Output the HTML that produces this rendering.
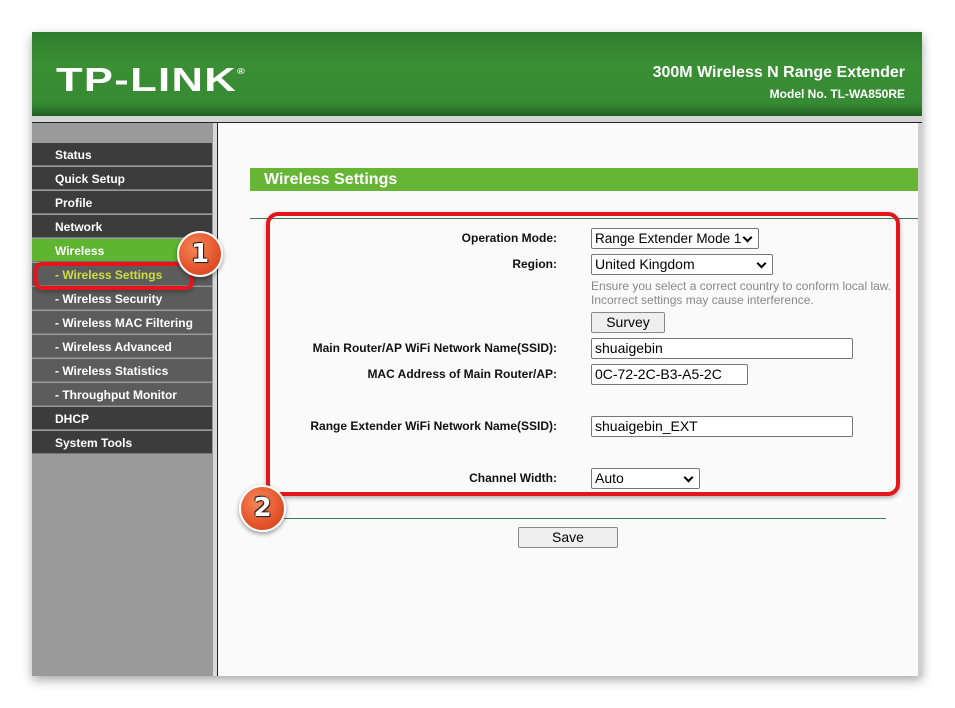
<!DOCTYPE html>
<html><head><meta charset="utf-8"><style>
*{margin:0;padding:0;box-sizing:border-box}
body{width:955px;height:708px;background:#fff;position:relative;overflow:hidden;font-family:"Liberation Sans",Arial,sans-serif}
.a{position:absolute}
#frame{left:32px;top:32px;width:890px;height:644px;background:#c8c8c8;box-shadow:0 4px 10px rgba(0,0,0,.35)}
#hdr{left:32px;top:32px;width:890px;height:84px;background:linear-gradient(180deg,#2f7d2f 0%,#3a8f34 40%,#368a33 85%,#1f5e22 100%)}
#logo{left:56px;top:62px;color:#fff;font-weight:bold;font-size:33px;letter-spacing:1px;transform:scaleX(1.32);transform-origin:left top;line-height:36px}
#strip{left:32px;top:116px;width:890px;height:7px;background:#d4d4d4}
#blk{left:32px;top:122px;width:890px;height:1px;background:#222}
#side{left:32px;top:123px;width:181px;height:553px;background:#9a9a9a}
#sep{left:213px;top:123px;width:4px;height:553px;background:#d8d8d8}
#sep2{left:217px;top:123px;width:1px;height:553px;background:#222}
#main{left:218px;top:123px;width:700px;height:553px;background:#fafafa}
#rgt{left:918px;top:123px;width:4px;height:553px;background:#d0d0d0}
.m{position:absolute;left:32px;width:180px;height:23px;background:#3c3c3c;color:#fff;font-size:12px;font-weight:bold;line-height:24px;padding-left:23px;border-bottom:1px solid #777}
.s{background:#5c5c5c;padding-left:23px}
.lbl{position:absolute;right:398px;font-size:12px;font-weight:bold;color:#111;text-align:right;white-space:nowrap}
.in{position:absolute;left:591px;height:21px;border:1px solid #777;background:#fff;font-size:14px;line-height:19px;padding-left:3px;color:#000;border-radius:2px;white-space:nowrap;overflow:hidden}
.sel::after{content:"";position:absolute;right:7px;top:5px;width:5px;height:5px;border-right:2px solid #000;border-bottom:2px solid #000;transform:rotate(45deg)}
.btn{position:absolute;height:21px;border:1px solid #888;background:#efefef;font-size:14px;text-align:center;line-height:19px;border-radius:2px}
.circ{position:absolute;border-radius:50%;background:radial-gradient(circle at 40% 35%,#f58a5a,#e4532a 60%,#c9401c);border:2px solid #fff;box-shadow:0 2px 5px rgba(0,0,0,.4);color:#fff;font-weight:bold;font-size:26px;text-align:center;font-family:"DejaVu Sans",sans-serif;text-shadow:0 0 2px #000,1px 1px 0 #333,-1px -1px 0 #333}
</style></head><body>
<div class="a" id="frame"></div>
<div class="a" id="hdr"></div>
<div class="a" id="logo">TP-LINK<span style="font-size:8px;vertical-align:top;line-height:20px">®</span></div>
<div class="a" style="right:50px;top:64px;color:#fff;font-weight:bold;font-size:16px">300M Wireless N Range Extender</div>
<div class="a" style="right:50px;top:87px;color:#fff;font-weight:bold;font-size:12px">Model No. TL-WA850RE</div>
<div class="a" id="strip"></div><div class="a" id="blk"></div>
<div class="a" id="side"></div><div class="a" id="sep"></div><div class="a" id="sep2"></div>
<div class="a" id="main"></div><div class="a" id="rgt"></div>

<div class="m" style="top:143px">Status</div>
<div class="m" style="top:167px">Quick Setup</div>
<div class="m" style="top:191px">Profile</div>
<div class="m" style="top:215px">Network</div>
<div class="m" style="top:239px;background:#5db530">Wireless</div>
<div class="m s" style="top:263px;color:#c8e040">- Wireless Settings</div>
<div class="m s" style="top:287px">- Wireless Security</div>
<div class="m s" style="top:311px">- Wireless MAC Filtering</div>
<div class="m s" style="top:335px">- Wireless Advanced</div>
<div class="m s" style="top:359px">- Wireless Statistics</div>
<div class="m s" style="top:383px">- Throughput Monitor</div>
<div class="m" style="top:407px">DHCP</div>
<div class="m" style="top:431px">System Tools</div>

<div class="a" style="left:250px;top:168px;width:668px;height:23px;background:#66b535;color:#fff;font-weight:bold;font-size:16px;line-height:23px;padding-left:14px">Wireless Settings</div>
<div class="a" style="left:250px;top:218px;width:668px;height:1px;background:#3a7a55"></div>
<div class="a" style="left:250px;top:518px;width:636px;height:1px;background:#3a7a55"></div>

<div class="lbl" style="top:231px">Operation Mode:</div>
<div class="in sel" style="top:228px;width:168px;font-size:13.5px;padding-right:18px">Range Extender Mode 1</div>
<div class="lbl" style="top:257px">Region:</div>
<div class="in sel" style="top:254px;width:182px">United Kingdom</div>
<div class="a" style="left:591px;top:279px;font-size:12px;color:#888;line-height:14px">Ensure you select a correct country to conform local law.<br>Incorrect settings may cause interference.</div>
<div class="btn" style="left:591px;top:312px;width:74px">Survey</div>
<div class="lbl" style="top:341px">Main Router/AP WiFi Network Name(SSID):</div>
<div class="in" style="top:338px;width:262px">shuaigebin</div>
<div class="lbl" style="top:367px">MAC Address of Main Router/AP:</div>
<div class="in" style="top:364px;width:157px">0C-72-2C-B3-A5-2C</div>
<div class="lbl" style="top:419px">Range Extender WiFi Network Name(SSID):</div>
<div class="in" style="top:416px;width:262px">shuaigebin_EXT</div>
<div class="lbl" style="top:471px">Channel Width:</div>
<div class="in sel" style="top:468px;width:109px">Auto</div>
<div class="btn" style="left:518px;top:527px;width:100px">Save</div>

<div class="a" style="left:266px;top:212px;width:634px;height:284px;border:4px solid #e5161b;border-radius:12px;box-shadow:0 2px 4px rgba(0,0,0,.3)"></div>
<div class="a" style="left:34px;top:262px;width:160px;height:28px;border:4px solid #e5161b;border-radius:8px;box-shadow:0 2px 4px rgba(0,0,0,.3)"></div>
<div class="circ" style="left:177px;top:231px;width:46px;height:46px;line-height:42px">1</div>
<div class="circ" style="left:239px;top:485px;width:47px;height:47px;line-height:43px">2</div>
</body></html>
